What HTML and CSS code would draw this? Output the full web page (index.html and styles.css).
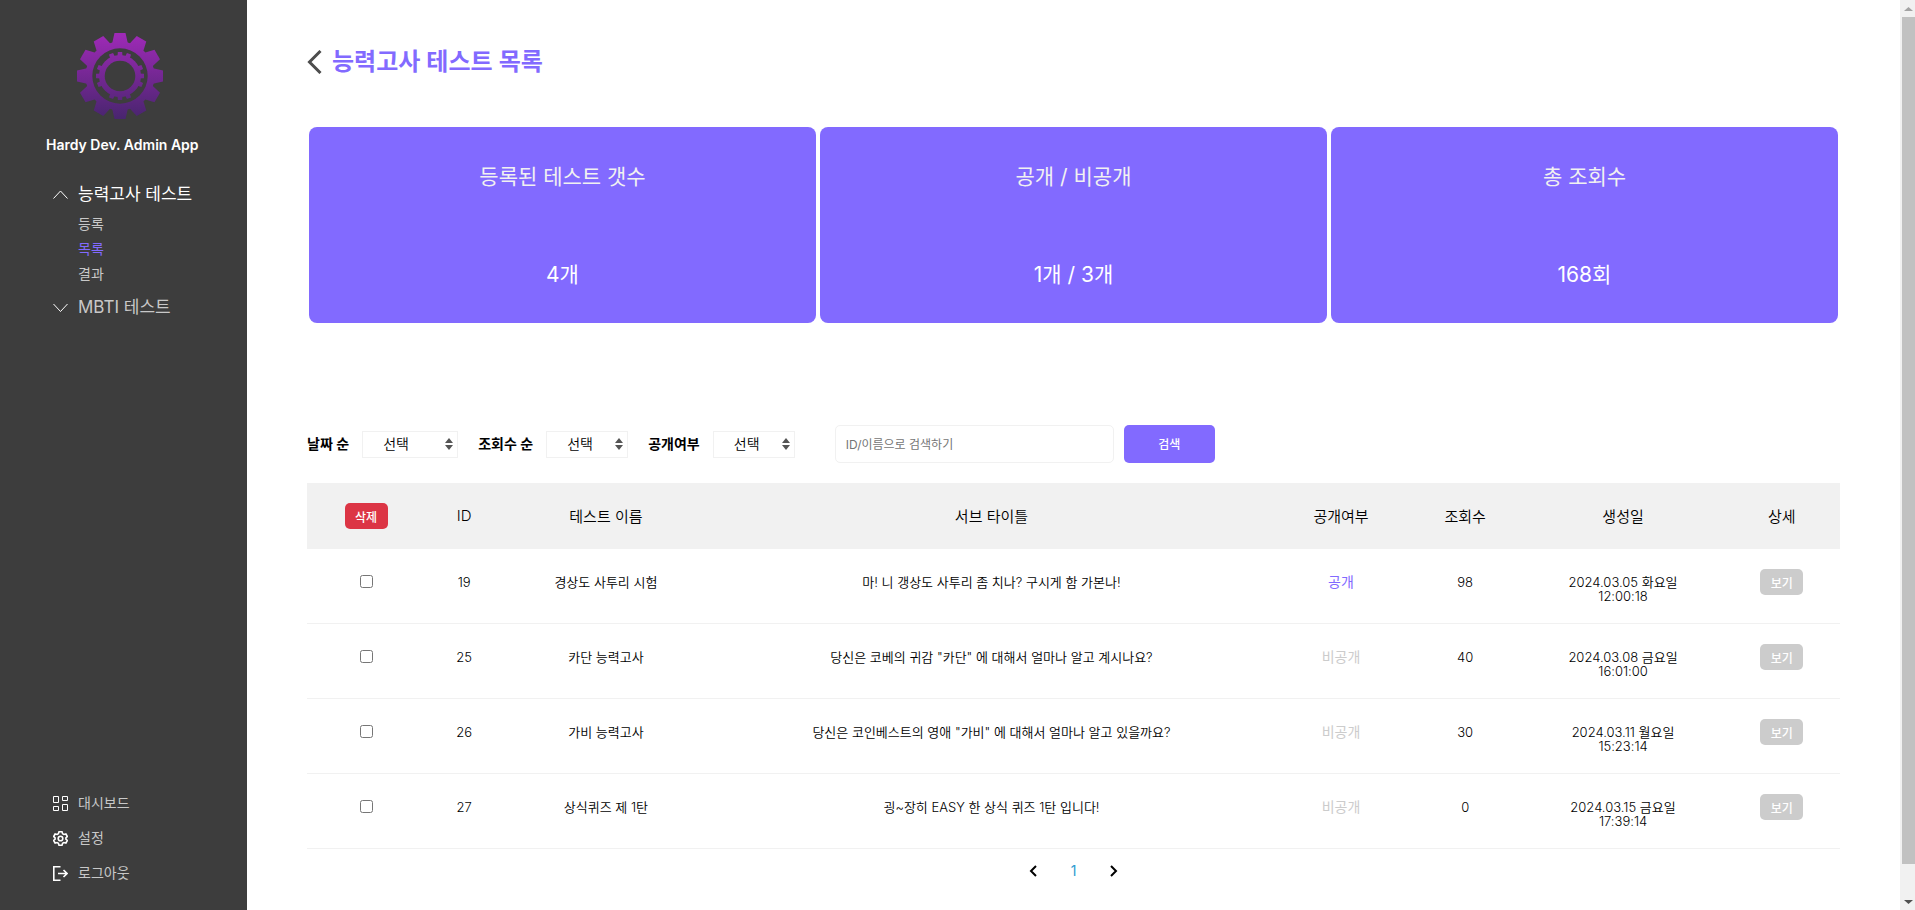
FILE: index.html
```html
<!DOCTYPE html>
<html lang="ko">
<head>
<meta charset="utf-8">
<title>Hardy Dev. Admin App</title>
<link rel="stylesheet" href="styles.css">
</head>
<body>
<aside class="sidebar">
  <svg class="logo" viewBox="-43 -43 86 86" aria-hidden="true">
    <defs>
      <linearGradient id="gear-fill" x1="0" y1="0" x2="0" y2="1">
        <stop offset="0" stop-color="#a02ab8"/>
        <stop offset="1" stop-color="#48256e"/>
      </linearGradient>
      <path id="tooth" d="M-8-32 L-5.5-43 H5.5 L8-32 Z"/>
      <path id="cog" d="M-2.6-18 L-2.2-24 H2.2 L2.6-18 Z"/>
      <mask id="gear-shape" maskUnits="userSpaceOnUse" x="-43" y="-43" width="86" height="86">
        <g fill="#fff">
          <use href="#tooth"/><use href="#tooth" transform="rotate(30)"/><use href="#tooth" transform="rotate(60)"/>
          <use href="#tooth" transform="rotate(90)"/><use href="#tooth" transform="rotate(120)"/><use href="#tooth" transform="rotate(150)"/>
          <use href="#tooth" transform="rotate(180)"/><use href="#tooth" transform="rotate(210)"/><use href="#tooth" transform="rotate(240)"/>
          <use href="#tooth" transform="rotate(270)"/><use href="#tooth" transform="rotate(300)"/><use href="#tooth" transform="rotate(330)"/>
          <circle r="34.5"/>
        </g>
        <circle r="27.7" fill="#000"/>
        <g fill="#fff">
          <use href="#cog"/><use href="#cog" transform="rotate(22)"/><use href="#cog" transform="rotate(-22)"/>
          <use href="#cog" transform="rotate(90)"/><use href="#cog" transform="rotate(68)"/><use href="#cog" transform="rotate(112)"/>
          <use href="#cog" transform="rotate(180)"/><use href="#cog" transform="rotate(158)"/><use href="#cog" transform="rotate(202)"/>
          <use href="#cog" transform="rotate(270)"/><use href="#cog" transform="rotate(248)"/><use href="#cog" transform="rotate(292)"/>
          <circle r="21"/>
        </g>
        <circle r="15.3" fill="#000"/>
      </mask>
    </defs>
    <rect x="-43" y="-43" width="86" height="86" fill="url(#gear-fill)" mask="url(#gear-shape)"/>
  </svg>
  <p class="brand">Hardy Dev. Admin App</p>
  <nav class="menu">
    <a class="menu-group is-open" href="#">
      <svg class="icon" viewBox="0 0 15 15"><path d="M0.5 11.5 L7.5 4 L14.5 11.5"/></svg>능력고사 테스트
    </a>
    <ul class="submenu">
      <li><a href="#">등록</a></li>
      <li><a class="is-current" href="#">목록</a></li>
      <li><a href="#">결과</a></li>
    </ul>
    <a class="menu-group" href="#">
      <svg class="icon" viewBox="0 0 15 15"><path d="M0.5 4 L7.5 11.5 L14.5 4"/></svg>MBTI 테스트
    </a>
  </nav>
  <nav class="tools">
    <a href="#"><svg class="icon" viewBox="0 0 15 15"><path d="M.5.5h5v6h-5zM9.500.5h5v4h-5zM.5 10.500h5v4h-5zM9.500 8.500h5v6h-5z"/></svg>대시보드</a>
    <a href="#"><svg class="icon icon-bold" viewBox="0 0 15 15"><path d="M6 .8h3l.6 1.900 1.300.8 2-.5 1.400 2.500-1.400 1.400v1.200l1.400 1.400-1.400 2.500-2-.5-1.300.8-.6 1.900H6l-.6-1.900-1.300-.8-2 .5L.7 9.500l1.400-1.400V6.900L.7 5.500 2.100 3l2 .5 1.300-.8z"/><circle cx="7.500" cy="7.500" r="2.300"/></svg>설정</a>
    <a href="#"><svg class="icon icon-bold" viewBox="0 0 15 15"><path d="M7.500.8H.8v13.400h6.700M5 7.500h9M10.500 4l3.500 3.500-3.500 3.500"/></svg>로그아웃</a>
  </nav>
</aside>

<main class="content">
  <header class="page-head">
    <a href="#" aria-label="뒤로"><svg class="back" viewBox="0 0 15 24"><path d="M13.500 1 L2.500 12 L13.500 23"/></svg></a>
    <h1>능력고사 테스트 목록</h1>
  </header>

  <section class="stats">
    <div class="stat"><h2>등록된 테스트 갯수</h2><p>4개</p></div>
    <div class="stat"><h2>공개 / 비공개</h2><p>1개 / 3개</p></div>
    <div class="stat"><h2>총 조회수</h2><p>168회</p></div>
  </section>

  <form class="filters">
    <label for="by-date">날짜 순</label>
    <span class="select select-wide"><select id="by-date"><option>선택</option></select><svg viewBox="0 0 8 12"><path d="M0 5 4 0 8 5zM0 7h8l-4 5z"/></svg></span>
    <label for="by-views">조회수 순</label>
    <span class="select"><select id="by-views"><option>선택</option></select><svg viewBox="0 0 8 12"><path d="M0 5 4 0 8 5zM0 7h8l-4 5z"/></svg></span>
    <label for="by-open">공개여부</label>
    <span class="select"><select id="by-open"><option>선택</option></select><svg viewBox="0 0 8 12"><path d="M0 5 4 0 8 5zM0 7h8l-4 5z"/></svg></span>
    <input class="search" type="text" placeholder="ID/이름으로 검색하기" aria-label="검색어">
    <button class="search-button" type="button">검색</button>
  </form>

  <table class="list">
    <colgroup>
      <col class="c-check"><col class="c-id"><col class="c-name"><col class="c-sub"><col class="c-open"><col class="c-views"><col class="c-date"><col class="c-view">
    </colgroup>
    <thead>
      <tr><th><button class="tag tag-delete" type="button">삭제</button></th><th>ID</th><th>테스트 이름</th><th>서브 타이틀</th><th>공개여부</th><th>조회수</th><th>생성일</th><th>상세</th></tr>
    </thead>
    <tbody>
      <tr><td><input type="checkbox" aria-label="19 선택"></td><td>19</td><td>경상도 사투리 시험</td><td>마! 니 갱상도 사투리 좀 치나? 구시게 함 가본나!</td><td class="open">공개</td><td>98</td><td>2024.03.05 화요일<br>12:00:18</td><td class="act"><button class="tag" type="button">보기</button></td></tr>
      <tr><td><input type="checkbox" aria-label="25 선택"></td><td>25</td><td>카단 능력고사</td><td>당신은 코베의 귀감 "카단" 에 대해서 얼마나 알고 계시나요?</td><td class="closed">비공개</td><td>40</td><td>2024.03.08 금요일<br>16:01:00</td><td class="act"><button class="tag" type="button">보기</button></td></tr>
      <tr><td><input type="checkbox" aria-label="26 선택"></td><td>26</td><td>가비 능력고사</td><td>당신은 코인베스트의 영애 "가비" 에 대해서 얼마나 알고 있을까요?</td><td class="closed">비공개</td><td>30</td><td>2024.03.11 월요일<br>15:23:14</td><td class="act"><button class="tag" type="button">보기</button></td></tr>
      <tr><td><input type="checkbox" aria-label="27 선택"></td><td>27</td><td>상식퀴즈 제 1탄</td><td>굉~장히 EASY 한 상식 퀴즈 1탄 입니다!</td><td class="closed">비공개</td><td>0</td><td>2024.03.15 금요일<br>17:39:14</td><td class="act"><button class="tag" type="button">보기</button></td></tr>
    </tbody>
  </table>

  <nav class="pager">
    <a href="#" aria-label="이전"><svg viewBox="0 0 8 12"><path d="M7 1 2 6 7 11"/></svg></a>
    <a class="page" href="#">1</a>
    <a href="#" aria-label="다음"><svg viewBox="0 0 8 12"><path d="M1 1 6 6 1 11"/></svg></a>
  </nav>
</main>

<div class="scrollbar" aria-hidden="true">
  <svg viewBox="0 0 15 17"><path d="M4 11h9L8.500 7z" fill="#a3a3a3"/></svg>
  <div class="thumb"></div>
  <svg viewBox="0 0 15 17"><path d="M4 7h9l-4.500 4z" fill="#505050"/></svg>
</div>
</body>
</html>
```
FILE: styles.css
```css
* {
  box-sizing: border-box;
  margin: 0;
  padding: 0;
}

body {
  display: flex;
  min-height: 100vh;
  background: #fff;
  color: #000;
  font-family: Inter, "Noto Sans CJK KR", sans-serif;
  font-size: 14px;
}

a {
  color: inherit;
  text-decoration: none;
}

button,
input,
select {
  font-family: inherit;
}

.sidebar {
  flex: 0 0 247px;
  display: flex;
  flex-direction: column;
  padding: 33px 0 27px;
  background: #3d3d3d;
  color: #c8c8c8;
}

.logo {
  width: 86px;
  margin-left: 77px;
}

.brand {
  margin: 16px 0 0 46px;
  color: #fff;
  font-size: 14px;
  font-weight: 600;
  line-height: 20px;
}

.menu {
  margin-top: 26px;
  padding-left: 53px;
}

.menu-group,
.tools a {
  display: flex;
  align-items: center;
  gap: 10px;
}

.menu-group {
  font-size: 17px;
  line-height: 26px;
}

.is-open {
  color: #fff;
}

.submenu {
  list-style: none;
  margin: 4px 0 8px;
  padding-left: 25px;
  line-height: 25px;
}

.is-current {
  color: #826aff;
}

.icon {
  width: 15px;
  height: 15px;
  fill: none;
  stroke: #fff;
  stroke-width: 1;
}

.icon-bold {
  stroke-width: 1.6;
}

.tools {
  display: grid;
  gap: 15px;
  margin-top: auto;
  padding-left: 53px;
  line-height: 20px;
}

.content {
  flex: 1;
  padding: 50px 60px 0;
}

.page-head {
  display: flex;
  align-items: center;
  gap: 10px;
  height: 24px;
}

.back {
  display: block;
  width: 15px;
  height: 24px;
  fill: none;
  stroke: #4d4d4d;
  stroke-width: 3;
}

h1 {
  color: #826aff;
  font-size: 24px;
  font-weight: 600;
  line-height: 26px;
}

.stats {
  display: grid;
  grid-template-columns: repeat(3, 1fr);
  gap: 4px;
  margin: 53px 2px 102px;
}

.stat {
  display: grid;
  gap: 72px;
  padding: 37px 0 35px;
  border-radius: 8px;
  background: #826aff;
  color: #fff;
  text-align: center;
  line-height: 26px;
}

.stat h2 {
  color: #f1f1f1;
  font-size: 21px;
  font-weight: 400;
}

.stat p {
  font-size: 21px;
}

.filters {
  display: flex;
  align-items: center;
  height: 38px;
  margin-bottom: 20px;
}

.filters label {
  margin-right: 13px;
  padding-bottom: 2px;
  font-weight: 600;
}

.select {
  position: relative;
  width: 82px;
  margin-right: 20px;
}

.select-wide {
  width: 96px;
}

.select select {
  display: block;
  width: 100%;
  height: 27px;
  padding: 0 0 2px 20px;
  border: 1px solid #f1f1f1;
  background: #fff;
  color: #000;
  font-size: 14px;
  font-weight: 350;
  appearance: none;
}

.select svg {
  position: absolute;
  top: 7px;
  right: 5px;
  width: 8px;
  height: 12px;
  fill: #555;
  pointer-events: none;
}

.search {
  width: 279px;
  height: 38px;
  margin: 0 10px 0 20px;
  padding: 0 10px;
  border: 1px solid #f1f1f1;
  border-radius: 5px;
  font-size: 12px;
}

.search::placeholder {
  color: #757575;
}

.search-button {
  width: 91px;
  height: 38px;
  padding-bottom: 2px;
  border: 0;
  border-radius: 5px;
  background: #826aff;
  color: #fff;
  font-size: 12px;
  font-weight: 500;
}

.list {
  width: 100%;
  table-layout: fixed;
  border-collapse: separate;
  border-spacing: 0;
  text-align: center;
}

.c-check { width: 7.7%; }
.c-id { width: 5.1%; }
.c-name { width: 13.4%; }
.c-sub { width: 36.9%; }
.c-open { width: 8.7%; }
.c-views { width: 7.5%; }
.c-date { width: 13.1%; }
.c-view { width: 7.6%; }

th {
  height: 66px;
  padding-bottom: 2px;
  background: #f1f1f1;
  font-size: 15px;
  font-weight: 350;
}

th:first-child {
  padding-bottom: 0;
}

td {
  height: 75px;
  padding-top: 26px;
  border-bottom: 1px solid #f1f1f1;
  font-size: 13px;
  font-weight: 350;
  line-height: 14px;
  vertical-align: top;
}

.open,
.closed {
  color: #826aff;
  font-size: 14px;
  font-weight: 400;
}

.closed {
  color: #ccc;
}

.act {
  padding-top: 20px;
}

.tag {
  width: 43px;
  height: 26px;
  border: 0;
  border-radius: 5px;
  background: #ccc;
  color: #fff;
  font-size: 12px;
  font-weight: 500;
  vertical-align: middle;
}

.tag-delete {
  background: #dc3545;
}

.pager {
  display: flex;
  justify-content: center;
  align-items: center;
  gap: 34px;
  margin-top: 12px;
  line-height: 20px;
}

.pager svg {
  display: block;
  width: 8px;
  height: 12px;
  fill: none;
  stroke: #000;
  stroke-width: 2;
}

.page {
  color: #2f9bd0;
}

.scrollbar {
  flex: 0 0 15px;
  display: flex;
  flex-direction: column;
  background: #f1f1f1;
}

.scrollbar svg {
  width: 15px;
  height: 17px;
}

.thumb {
  flex: 1;
  margin: 0 0 29px 2px;
  background: #c1c1c1;
}
```
